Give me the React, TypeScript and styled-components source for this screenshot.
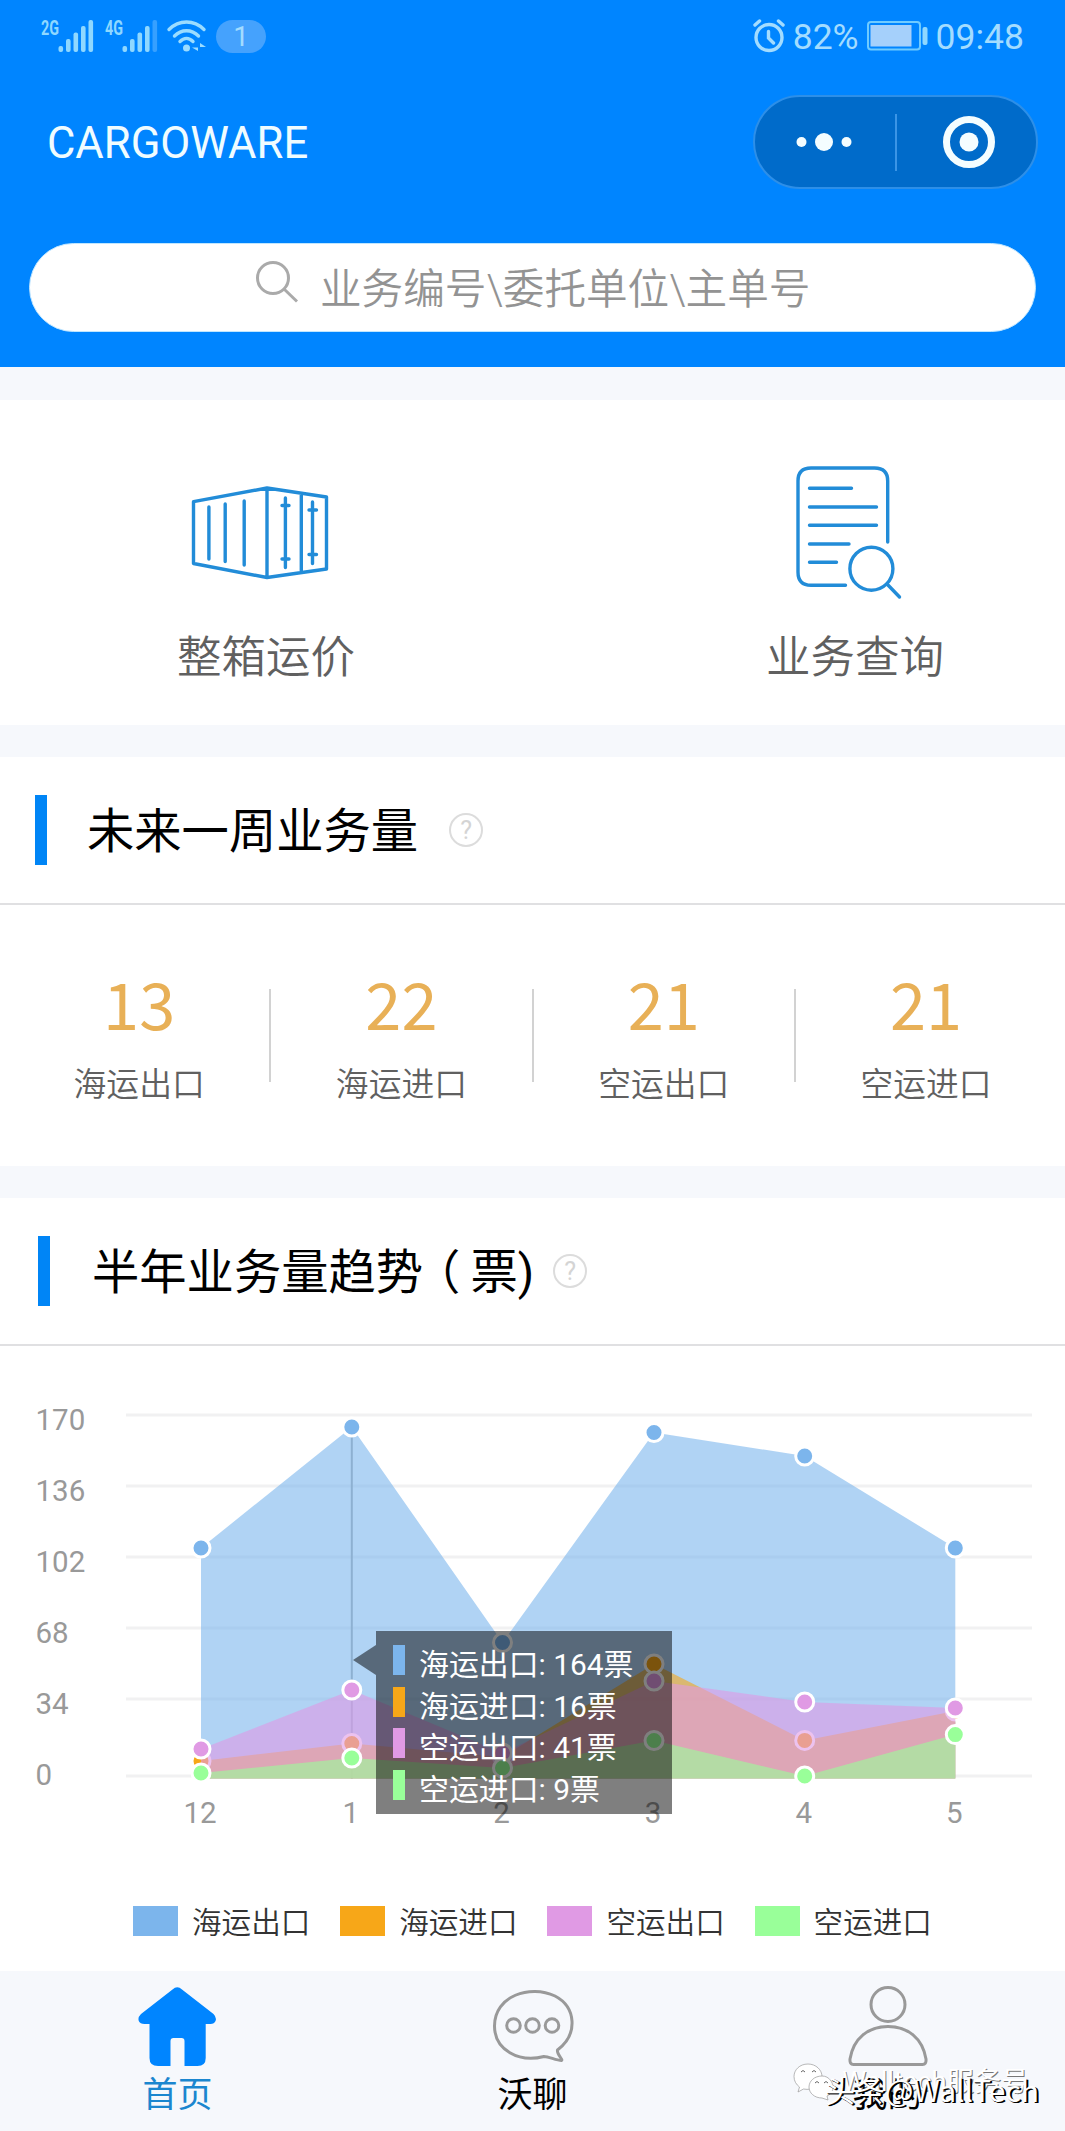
import React from "react";
import styled, { createGlobalStyle } from "styled-components";

const GlobalStyle = createGlobalStyle`
  body {
    margin: 0;
    background: #f6f8fc;
    font-family: Roboto, "Noto Sans CJK SC", sans-serif;
  }
  * { box-sizing: border-box; }
  svg { display: block; flex: none; overflow: visible; }
`;

const Page = styled.div`
  width: 1065px;
  height: 2131px;
  display: flex;
  flex-direction: column;
  overflow: hidden;
`;

const Header = styled.header`
  height: 367px;
  flex: none;
  background: #0085ff;
`;

const StatusBar = styled.div`
  height: 72px;
  padding: 0 41px 0 39px;
  display: flex;
  align-items: center;
  justify-content: space-between;
  color: #a3dcff;
`;

const StatusGroup = styled.div<{ $gap: number }>`
  display: flex;
  align-items: center;
  gap: ${(p) => p.$gap}px;
`;

const StatusText = styled.span`
  font-size: 35.5px;
  line-height: 40px;
  padding-top: 2px;
`;

const CountPill = styled.span`
  width: 50px;
  height: 33px;
  border-radius: 17px;
  background: #45a2fd;
  font-size: 28px;
  line-height: 34px;
  text-align: center;
`;

const NavRow = styled.div`
  height: 94px;
  margin-top: 23px;
  padding: 0 27px 0 47px;
  display: flex;
  align-items: center;
  justify-content: space-between;
`;

const AppTitle = styled.h1`
  margin: 0;
  font-size: 43.6px;
  font-weight: 400;
  line-height: 60px;
  padding-top: 3px;
  color: #f0fcff;
`;

const Capsule = styled.div`
  width: 285px;
  height: 94px;
  border-radius: 47px;
  border: 2px solid #2d8fe8;
  background: #006bca;
  display: flex;
  align-items: center;
`;

const CapsuleHalf = styled.div<{ $grow: number }>`
  flex: ${(p) => p.$grow} 0 0;
  display: flex;
  justify-content: center;
`;

const CapsuleRule = styled.div`
  width: 2px;
  height: 57px;
  background: #3b95e6;
`;

const SearchBox = styled.div`
  height: 89px;
  margin: 54px 29px 0;
  padding-left: 226px;
  border-radius: 45px;
  background: #fff;
  border: 1px solid #bfe6ff;
  display: flex;
  align-items: center;
  gap: 21px;
`;

const SearchText = styled.span`
  font-size: 41.6px;
  line-height: 60px;
  padding-top: 4px;
  font-weight: 350;
  color: #939393;
  white-space: nowrap;
`;

const Panel = styled.section<{ $height: number; $top: number }>`
  height: ${(p) => p.$height}px;
  margin-top: ${(p) => p.$top}px;
  flex: none;
  background: #fff;
`;

const Shortcuts = styled.div`
  height: 325px;
  padding: 60px 88px 0 144px;
  display: flex;
  justify-content: space-between;
`;

const Shortcut = styled.div`
  width: 244px;
  display: flex;
  flex-direction: column;
  align-items: center;

  svg {
    margin-right: 13px;
  }
`;

const ShortcutLabel = styled.span<{ $top: number }>`
  margin-top: ${(p) => p.$top}px;
  font-size: 44.5px;
  line-height: 60px;
  font-weight: 350;
  color: #606060;
`;

const SectionHead = styled.div<{ $left: number }>`
  height: 148px;
  padding-left: ${(p) => p.$left}px;
  border-bottom: 2px solid #e0e0e2;
  display: flex;
  align-items: center;
`;

const HeadBar = styled.div`
  width: 12px;
  height: 70px;
  background: #0085f6;
`;

const HeadTitle = styled.h2<{ $left: number; $gap: number }>`
  margin: 0 ${(p) => p.$gap}px 0 ${(p) => p.$left}px;
  font-size: 47.3px;
  line-height: 60px;
  padding-top: 3px;
  font-weight: 400;
  color: #000;
  white-space: nowrap;
`;

const OpenParen = styled.span`
  margin: 0 10px 0 -10px;
`;

const HelpMark = styled.span`
  width: 34px;
  height: 34px;
  border-radius: 50%;
  border: 2px solid #dcdcdc;
  color: #d4d4d4;
  font-size: 25px;
  line-height: 31px;
  text-align: center;
`;

const Stats = styled.div`
  display: grid;
  grid-template-columns: repeat(4, 262.3px);
  padding: 53px 0 0 8px;
`;

const Stat = styled.div`
  display: flex;
  flex-direction: column;
  align-items: center;
  position: relative;

  &:not(:last-child)::after {
    content: "";
    position: absolute;
    right: -1px;
    top: 31px;
    width: 2px;
    height: 93px;
    background: #d2d2d2;
  }
`;

const StatValue = styled.span`
  font-family: "Noto Sans CJK SC", sans-serif;
  font-size: 65px;
  line-height: 88px;
  color: #e8b057;
`;

const StatLabel = styled.span`
  font-size: 32.8px;
  line-height: 44px;
  margin-top: 17px;
  font-weight: 350;
  color: #606060;
`;

const ChartArea = styled.div`
  position: relative;
  height: 560px;
`;

const AxisText = styled.text`
  font-family: Roboto, sans-serif;
  font-size: 29.5px;
  fill: #999;
`;

const Tooltip = styled.div`
  position: absolute;
  left: 376px;
  top: 285px;
  width: 296px;
  height: 183px;
  padding: 14px 0 0 17px;
  background: rgba(0, 0, 0, 0.5);

  &::before {
    content: "";
    position: absolute;
    right: 100%;
    top: 14px;
    border: solid transparent;
    border-width: 15px 23px 15px 0;
    border-right-color: rgba(0, 0, 0, 0.5);
  }
`;

const TooltipRow = styled.div`
  height: 41.6px;
  display: flex;
  gap: 14px;
  font-size: 29.9px;
  line-height: 40px;
  color: #fff;
  white-space: nowrap;
`;

const TooltipKey = styled.i<{ $color: string }>`
  width: 12px;
  height: 30px;
  background: ${(p) => p.$color};
`;

const Legend = styled.div`
  display: grid;
  grid-template-columns: repeat(4, 207.2px);
  padding-left: 133px;
  margin-top: -1px;
`;

const LegendItem = styled.div`
  display: flex;
  align-items: center;
  gap: 14px;
  height: 32px;
  font-size: 29.6px;
  line-height: 32px;
  font-weight: 350;
  color: #333;
`;

const LegendName = styled.span`
  padding-top: 3px;
`;

const LegendKey = styled.i<{ $color: string }>`
  width: 45px;
  height: 30px;
  background: ${(p) => p.$color};
`;

const TabBar = styled.nav`
  position: relative;
  height: 160px;
  flex: none;
  display: grid;
  grid-template-columns: repeat(3, 1fr);
  background: #f6f8fc;
`;

const Tab = styled.div<{ $active?: boolean }>`
  display: flex;
  flex-direction: column;
  align-items: center;
  padding-top: 15px;
  font-size: 35px;
  line-height: 46px;
  color: ${(p) => (p.$active ? "#1b86cf" : "#000")};
`;

const TabLabel = styled.span`
  margin-top: 7px;
`;

const AccountMark = styled.div`
  position: absolute;
  left: 793px;
  top: 92px;
  display: flex;
  gap: 9px;
  font-size: 27.3px;
  line-height: 38px;
  color: #fff;
  text-shadow: 1px 1px 0 #777;
  white-space: nowrap;
`;

const AuthorMark = styled.div`
  position: absolute;
  left: 825px;
  top: 98px;
  font-family: "Noto Sans CJK SC", sans-serif;
  font-size: 30px;
  line-height: 40px;
  color: #fff;
  text-shadow: 2px 1px 0 #000, 1px 1px 0 #000;
  white-space: nowrap;
`;

const SERIES = [
  { name: "海运出口", color: "#7cb5ec", tip: "164票", y: [1548, 1427, 1642.5, 1432.5, 1456, 1548] },
  { name: "海运进口", color: "#f7a718", tip: "16票", y: [1761, 1743.5, 1757, 1664, 1740.4, 1711] },
  { name: "空运出口", color: "#e09ae4", tip: "41票", y: [1749, 1690, 1753, 1681, 1702, 1708] },
  { name: "空运进口", color: "#99ff99", tip: "9票", y: [1773, 1758, 1768, 1740.5, 1776, 1734.6] },
];
const XS = [201, 351.8, 502.5, 654, 804.7, 955.3];
const MONTHS = ["12", "1", "2", "3", "4", "5"];
const GRID: [string, number][] = [
  ["170", 1415],
  ["136", 1486],
  ["102", 1557],
  ["68", 1628],
  ["34", 1699],
  ["0", 1776],
];
const TOP = 1346;
const BASE = 1778.5;

const Signal = ({ label, weak }: { label: string; weak?: boolean }) => (
  <svg width="55" height="34" viewBox="-2 0 55 34">
    <text x="0" y="16" fontFamily="Roboto" fontWeight="700" fontSize="20" textLength="18" lengthAdjust="spacingAndGlyphs" fill="#8fd8ff">
      {label}
    </text>
    {[27, 20, 13.5, 7, 1].map((top, i) => (
      <rect key={top} x={17.5 + i * 7.5} y={top} width="4.6" height={33 - top} rx="2" fill={weak && i === 4 ? "#37a0ff" : "#8fd8ff"} />
    ))}
  </svg>
);

const Wifi = () => (
  <svg width="40" height="34" viewBox="0 0 40 34" fill="none" stroke="#9bdcff" strokeWidth="3.400" strokeLinecap="round">
    <path d="M2 10.500C12 .5 27 .5 37 10.500" />
    <path d="M7.500 17C14.500 10 24.500 10 31.500 17" />
    <path d="M13 22.500C17 18.500 22 18.500 26 22.500" />
    <circle cx="19.500" cy="29" r="3.500" fill="#9bdcff" stroke="none" />
    <path d="M31 24v8l-6-3.500h6zM33 32.500V24l6 4h-6z" fill="#9bdcff" stroke="none" />
  </svg>
);

const Alarm = () => (
  <svg width="32" height="34" viewBox="0 0 32 34" fill="none" stroke="#a3dcff" strokeWidth="3.400" strokeLinecap="round">
    <circle cx="16" cy="18.500" r="13" />
    <path d="M2 6L6.500 2M30 6L25.500 2M15.500 12.500V19L20.500 24" />
  </svg>
);

const Battery = () => (
  <svg width="61" height="30" viewBox="0 0 61 30">
    <rect x="1" y="1" width="52" height="27.500" rx="3" fill="none" stroke="#6fcbff" strokeWidth="2" />
    <rect x="3.500" y="4" width="41" height="21.500" fill="#a5d0fb" />
    <rect x="55.500" y="6" width="5" height="18" rx="2" fill="#8fd8ff" />
  </svg>
);

const ContainerIcon = () => (
  <svg width="136" height="130" viewBox="192.500 460 136 130" fill="none" stroke="#228cd8" strokeWidth="3.400" strokeLinejoin="round" strokeLinecap="round">
    <path d="M194 501.700L267.500 488L327 497V569L267.500 577.500L194 563.500ZM267.500 488V577.500M301.800 493.500V572.500" />
    <path d="M209.400 507V559M225.700 504V561.500M244.700 501V565M285.900 498V567.500M313 502V563.500" />
    <path d="M282.500 505.500h7M282.500 559h7M309.500 510h7.500M309.500 554.500h7.500" />
  </svg>
);

const QueryIcon = () => (
  <svg width="108" height="140" viewBox="795.500 460 108 140" fill="none" stroke="#228cd8" strokeWidth="3.400" strokeLinecap="round">
    <path d="M888.200 542V481Q888.200 468 875 468H811.500Q798.500 468 798.500 481V572Q798.500 585.300 811.500 585.300H846" />
    <path d="M810 488.300H852M810 507H877M810 525.300H877M810 544H849.500M810 562.300H837" />
    <circle cx="871.900" cy="568.700" r="21.500" />
    <path d="M887.500 584L900 597" />
  </svg>
);

const HomeIcon = () => (
  <svg width="79" height="80" viewBox="138 1986 79 80">
    <path
      fill="#0085ff"
      d="M172.500 1989.500Q177.300 1985 182 1989.500L213.500 2014Q217 2017.500 215.500 2021Q214.300 2024 210.500 2024H205.700V2058Q205.700 2066 197.500 2066H184.500V2041Q184.500 2038 181.500 2038H173.500Q170.500 2038 170.500 2041V2066H158Q149.500 2066 149.500 2058V2024H144.500Q140 2024 138.800 2021Q137.500 2017.500 141 2014Z"
    />
  </svg>
);

const ChatIcon = () => (
  <svg width="82" height="80" viewBox="492 1986 82 80" fill="none" stroke="#999" strokeWidth="3" strokeLinejoin="round">
    <path d="M557.500 2050C578.500 2034 576 2007 555 1996C530 1984 494.500 1996 494.500 2026C494.500 2050 519 2063 544 2056.500C549 2056.500 556 2060.500 561.500 2060.500C563.500 2060 556.500 2054 557.500 2050Z" />
    <circle cx="513.500" cy="2025.500" r="6.800" />
    <circle cx="532.500" cy="2025.500" r="6.800" />
    <circle cx="552" cy="2025.500" r="6.800" />
  </svg>
);

const UserIcon = () => (
  <svg width="82" height="80" viewBox="846.500 1986 82 80" fill="none" stroke="#999" strokeWidth="3">
    <circle cx="887.500" cy="2004.500" r="17" />
    <path d="M853 2064.500H922Q926 2064.500 925.500 2059C922 2038 907 2026.500 887.500 2026.500S853 2038 849.500 2059Q849 2064.500 853 2064.500Z" />
  </svg>
);

const WechatMark = () => (
  <svg width="40" height="38" viewBox="0 0 40 38" fill="#fff" stroke="#999" strokeWidth="0.700">
    <path d="M15 1C6.500 1 1 7 1 13.500C1 18 3.200 21.500 6.500 24L5 29L10.500 26C20 28 29 22 29 13.500C29 7 23 1 15 1Z" />
    <path d="M29 13C21.500 13 16 18 16 24S21.500 35 29 35L35 37L34 33C38 31 40 28 40 24S36.500 13 29 13Z" />
    <path d="M8 9q2-3 4 0M19 9q2-3 4 0M22 20q2-3 4 0M31 20q2-3 4 0" fill="none" stroke="#222" />
  </svg>
);

const TrendChart = () => (
  <svg width="1065" height="500" viewBox={`0 ${TOP} 1065 500`}>
    {GRID.map(([label, y]) => (
      <g key={label}>
        <line x1="126" x2="1032" y1={y} y2={y} stroke="#f1f1f2" strokeWidth="3" />
        <AxisText x="35.500" y={y + (label === "0" ? 8.500 : 14.500)}>{label}</AxisText>
      </g>
    ))}
    <line x1={XS[1]} x2={XS[1]} y1="1427" y2={BASE} stroke="#a8a8a8" strokeWidth="2" />
    {SERIES.map((s) => (
      <g key={s.name}>
        <polygon
          points={`${XS.map((x, i) => `${x},${s.y[i]}`).join(" ")} ${XS[5]},${BASE} ${XS[0]},${BASE}`}
          fill={s.color}
          fillOpacity="0.600"
        />
        {XS.map((x, i) => (
          <circle key={x} cx={x} cy={s.y[i]} r="9" fill={s.color} stroke="#fff" strokeWidth="3" />
        ))}
      </g>
    ))}
    {XS.map((x, i) => (
      <AxisText key={x} x={x - 1} y="1823" textAnchor="middle">{MONTHS[i]}</AxisText>
    ))}
  </svg>
);

const STATS: [string, string][] = [
  ["13", "海运出口"],
  ["22", "海运进口"],
  ["21", "空运出口"],
  ["21", "空运进口"],
];

export default function App() {
  return (
    <Page>
      <GlobalStyle />
      <Header>
        <StatusBar>
          <StatusGroup $gap={9}>
            <Signal label="2G" />
            <Signal label="4G" weak />
            <Wifi />
            <CountPill>1</CountPill>
          </StatusGroup>
          <StatusGroup $gap={8}>
            <Alarm />
            <StatusText>82%</StatusText>
            <Battery />
            <StatusText>09:48</StatusText>
          </StatusGroup>
        </StatusBar>
        <NavRow>
          <AppTitle>CARGOWARE</AppTitle>
          <Capsule>
            <CapsuleHalf $grow={141}>
              <svg width="58" height="20" viewBox="0 0 58 20" fill="#f4fdff">
                <circle cx="5.500" cy="10" r="5" />
                <circle cx="28" cy="10" r="9" />
                <circle cx="50.500" cy="10" r="5" />
              </svg>
            </CapsuleHalf>
            <CapsuleRule />
            <CapsuleHalf $grow={140}>
              <svg width="54" height="54" viewBox="0 0 54 54">
                <circle cx="29" cy="27" r="22.500" fill="none" stroke="#f4fdff" strokeWidth="7" />
                <circle cx="29" cy="27" r="9.500" fill="#f4fdff" />
              </svg>
            </CapsuleHalf>
          </Capsule>
        </NavRow>
        <SearchBox>
          <svg width="43" height="54" viewBox="0 0 43 54" fill="none" stroke="#aaa" strokeWidth="3">
            <circle cx="17" cy="17" r="15.500" />
            <path d="M28 28L41 40.500" />
          </svg>
          <SearchText>业务编号\委托单位\主单号</SearchText>
        </SearchBox>
      </Header>

      <Panel $height={325} $top={33}>
        <Shortcuts>
          <Shortcut>
            <ContainerIcon />
            <ShortcutLabel $top={38}>整箱运价</ShortcutLabel>
          </Shortcut>
          <Shortcut>
            <QueryIcon />
            <ShortcutLabel $top={28}>业务查询</ShortcutLabel>
          </Shortcut>
        </Shortcuts>
      </Panel>

      <Panel $height={409} $top={32}>
        <SectionHead $left={35}>
          <HeadBar />
          <HeadTitle $left={40} $gap={31}>未来一周业务量</HeadTitle>
          <HelpMark>?</HelpMark>
        </SectionHead>
        <Stats>
          {STATS.map(([value, label]) => (
            <Stat key={label}>
              <StatValue>{value}</StatValue>
              <StatLabel>{label}</StatLabel>
            </Stat>
          ))}
        </Stats>
      </Panel>

      <Panel $height={773} $top={32}>
        <SectionHead $left={38}>
          <HeadBar />
          <HeadTitle $left={42} $gap={19}>
            半年业务量趋势<OpenParen>（</OpenParen>票)
          </HeadTitle>
          <HelpMark>?</HelpMark>
        </SectionHead>
        <ChartArea>
          <TrendChart />
          <Tooltip>
            {SERIES.map((s) => (
              <TooltipRow key={s.name}>
                <TooltipKey $color={s.color} />
                {s.name}: {s.tip}
              </TooltipRow>
            ))}
          </Tooltip>
        </ChartArea>
        <Legend>
          {SERIES.map((s) => (
            <LegendItem key={s.name}>
              <LegendKey $color={s.color} />
              <LegendName>{s.name}</LegendName>
            </LegendItem>
          ))}
        </Legend>
      </Panel>

      <TabBar>
        <Tab $active>
          <HomeIcon />
          <TabLabel>首页</TabLabel>
        </Tab>
        <Tab>
          <ChatIcon />
          <TabLabel>沃聊</TabLabel>
        </Tab>
        <Tab>
          <UserIcon />
          <TabLabel>我的</TabLabel>
        </Tab>
        <AccountMark>
          <WechatMark />
          Walltech服务号
        </AccountMark>
        <AuthorMark>头条@WallTech</AuthorMark>
      </TabBar>
    </Page>
  );
}
